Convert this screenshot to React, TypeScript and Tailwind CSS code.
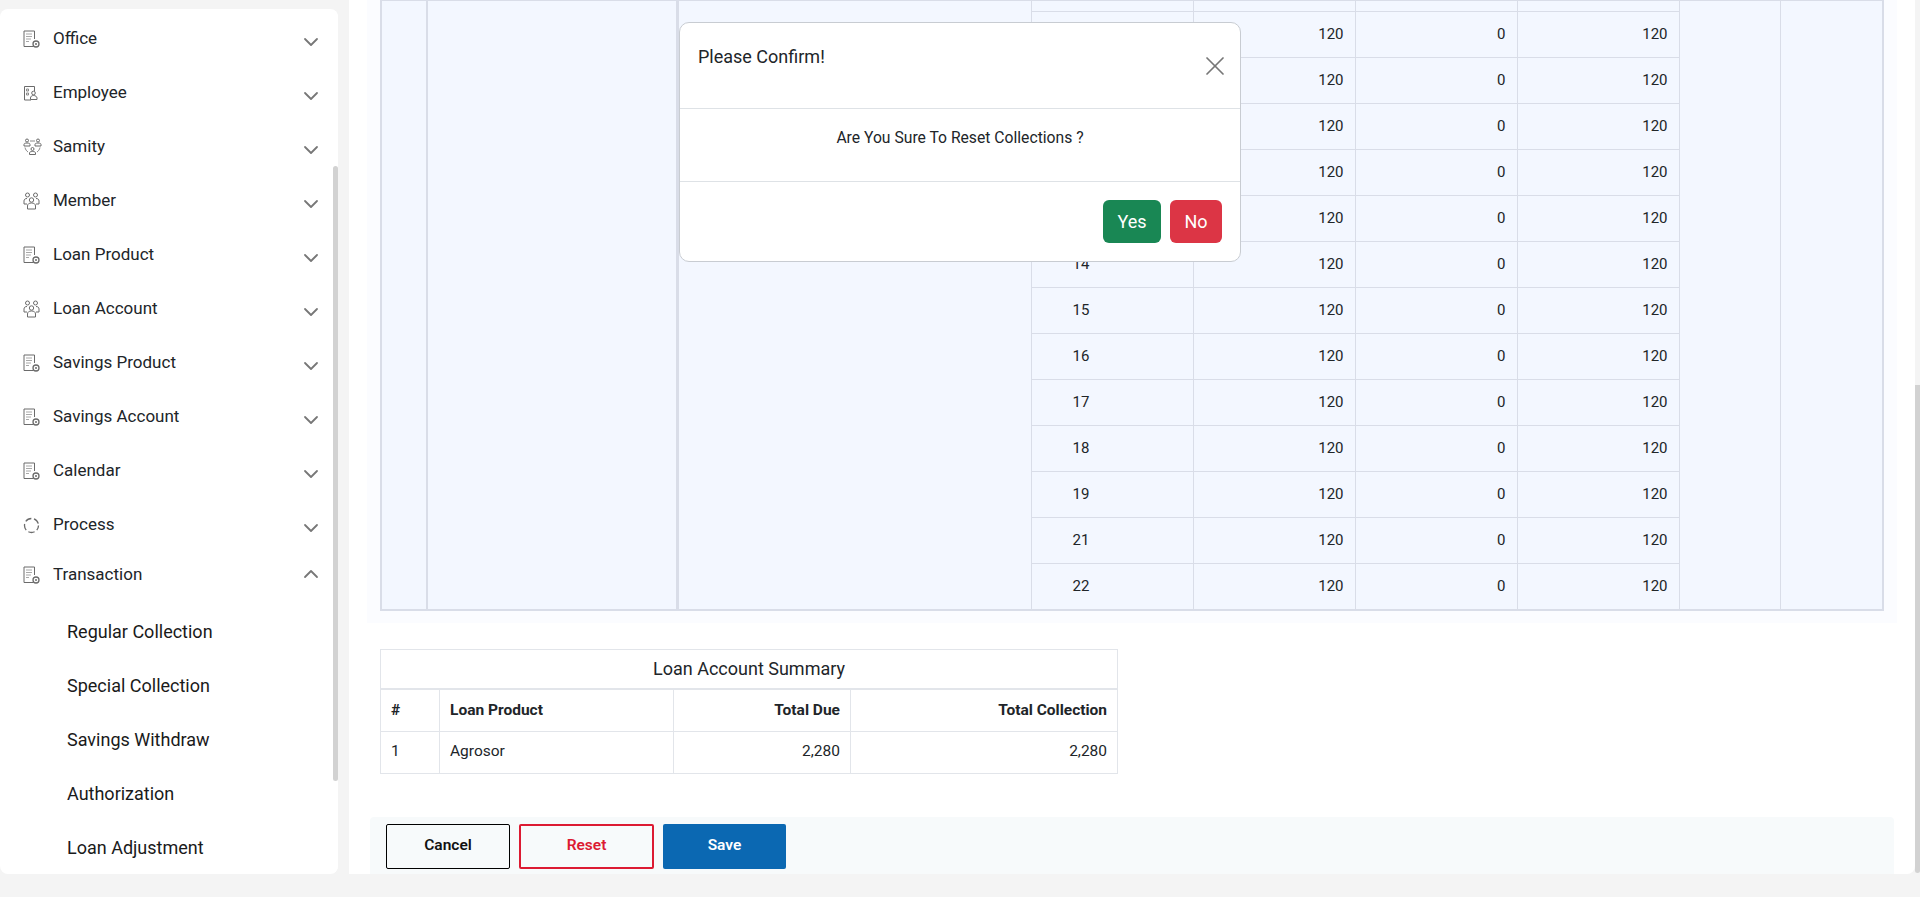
import React from 'react';
import { ChevronDown, ChevronUp, X } from 'lucide-react';

function DocIcon() {
  return (
    <svg width="17" height="18" viewBox="0 0 17 18" fill="none" stroke="#6b6b6b" strokeWidth="1">
      <path d="M10.500 16.500H1V1h10.500v8" />
      <path d="M3 4h6M3 6.500h6M3 9h5M3 11.500h3" stroke="#a8a8a8" />
      <circle cx="13" cy="14" r="3" strokeWidth="1.300" />
      <circle cx="13" cy="14" r="1" fill="#6b6b6b" stroke="none" />
    </svg>
  );
}

function EmployeeIcon() {
  return (
    <svg width="16" height="16" viewBox="0 0 16 16" fill="none" stroke="#6b6b6b" strokeWidth="1">
      <path d="M8 15H1.500V1.500h10V6" />
      <path d="M3.500 4h2v2h-2zM3.500 8h2v2h-2z" stroke="#8a8a8a" />
      <circle cx="10.500" cy="8" r="1.800" />
      <path d="M7.500 14.500v-1.500c0-1.500 1.200-2.500 3-2.500s3.500 1 3.500 2.500v1.500z" />
    </svg>
  );
}

function SamityIcon() {
  return (
    <svg width="19" height="18" viewBox="0 0 19 18" fill="none" stroke="#6b6b6b" strokeWidth="1">
      <circle cx="4" cy="2.500" r="1.500" />
      <circle cx="15" cy="2.500" r="1.500" />
      <circle cx="9.500" cy="11" r="1.500" />
      <path d="M1 8V6.500C1 5.500 2 5 4 5s3 .5 3 1.500V8zM12 8V6.500c0-1 1-1.500 3-1.500s3 .5 3 1.500V8zM6.500 16.500V15c0-1 1-1.500 3-1.500s3 .5 3 1.500v1.500z" />
      <path d="M7 3h5M2 9.500c.5 2 1.500 3.500 3 4.500M17 9.500c-.5 2-1.500 3.500-3 4.500" stroke="#8a8a8a" />
    </svg>
  );
}

function MemberIcon() {
  return (
    <svg width="17" height="18" viewBox="0 0 17 18" fill="none" stroke="#6b6b6b" strokeWidth="1">
      <circle cx="4.500" cy="3" r="2" />
      <circle cx="12.500" cy="3" r="2" />
      <circle cx="8.500" cy="8" r="2.200" />
      <path d="M1 12V9c0-1.500 1-2.500 3-2.500M16 12V9c0-1.500-1-2.500-3-2.500M1 12h3M16 12h-3" />
      <path d="M4.500 17v-3c0-2 1.500-3 4-3s4 1 4 3v3z" />
    </svg>
  );
}

function ProcessIcon() {
  return (
    <svg width="17" height="17" viewBox="0 0 17 17" fill="none" stroke="#6b6b6b" strokeWidth="1.300">
      <circle cx="8.500" cy="8.500" r="7" strokeDasharray="6.500 2.700" strokeDashoffset="1.500" />
    </svg>
  );
}

const menu = [
  { label: 'Office', icon: <DocIcon /> },
  { label: 'Employee', icon: <EmployeeIcon /> },
  { label: 'Samity', icon: <SamityIcon /> },
  { label: 'Member', icon: <MemberIcon /> },
  { label: 'Loan Product', icon: <DocIcon /> },
  { label: 'Loan Account', icon: <MemberIcon /> },
  { label: 'Savings Product', icon: <DocIcon /> },
  { label: 'Savings Account', icon: <DocIcon /> },
  { label: 'Calendar', icon: <DocIcon /> },
  { label: 'Process', icon: <ProcessIcon /> },
];

const subMenu = ['Regular Collection', 'Special Collection', 'Savings Withdraw', 'Authorization', 'Loan Adjustment'];

const rows = ['', '', '', '', '', '14', '15', '16', '17', '18', '19', '21', '22'];

const cell = 'border border-[#d9dde8]';
const sumCell = 'border border-[#e2e5ea] px-[10px]';

function Sidebar() {
  return (
    <aside className="flex w-[338px] h-[865px] mt-[9px] bg-white rounded-lg overflow-hidden shrink-0">
      <div className="flex-1 min-w-0 pt-[3px]">
        {menu.map((item) => (
          <div key={item.label} className="flex items-center h-[54px] pl-[23px] pr-[10px]">
            <span className="flex w-[30px] shrink-0 items-center">{item.icon}</span>
            <span className="flex-1 text-[17px] text-[#212529]">{item.label}</span>
            <ChevronDown size={24} strokeWidth={1.800} className="text-[#777777] mt-[6px]" />
          </div>
        ))}
        <div className="flex items-center h-[46px] pl-[23px] pr-[10px]">
          <span className="flex w-[30px] shrink-0 items-center"><DocIcon /></span>
          <span className="flex-1 text-[17px] text-[#212529]">Transaction</span>
          <ChevronUp size={24} strokeWidth={1.800} className="text-[#777777] -mt-[2px]" />
        </div>
        <div className="pt-[6px]">
          {subMenu.map((s) => (
            <div key={s} className="flex items-center h-[54px] pl-[67px] text-[18px] text-[#1a1a1a]">{s}</div>
          ))}
        </div>
      </div>
      <div className="w-[5px] shrink-0 bg-white pt-[157px]">
        <div className="h-[615px] bg-[#d2d2d2] rounded-full" />
      </div>
    </aside>
  );
}

function CollectionTable() {
  return (
    <div className="w-[1530px] bg-[#fbfcff] pl-[13px] pb-[12px]">
      <table className="table-fixed border-collapse w-[1502px] bg-[#f3f7ff] text-[15px] text-[#212529] border-2 border-t-0 border-[#d9dde8]">
        <colgroup>
          <col className="w-[46px]" />
          <col className="w-[250px]" />
          <col className="w-[354px]" />
          <col className="w-[162px]" />
          <col className="w-[162px]" />
          <col className="w-[162px]" />
          <col className="w-[162px]" />
          <col className="w-[101px]" />
          <col className="w-[103px]" />
        </colgroup>
        <tbody>
          <tr className="h-[11px]">
            <td rowSpan={14} className={`${cell} border-r-2`} />
            <td rowSpan={14} className={`${cell} border-r-3`} />
            <td rowSpan={14} className={cell} />
            <td className={cell} />
            <td className={cell} />
            <td className={cell} />
            <td className={cell} />
            <td rowSpan={14} className={cell} />
            <td rowSpan={14} className={cell} />
          </tr>
          {rows.map((n, i) => (
            <tr key={i} className="h-[46px]">
              <td className={`${cell} pl-[41px]`}>{n}</td>
              <td className={`${cell} text-right pr-[11px]`}>120</td>
              <td className={`${cell} text-right pr-[11px]`}>0</td>
              <td className={`${cell} text-right pr-[11px]`}>120</td>
            </tr>
          ))}
        </tbody>
      </table>
    </div>
  );
}

function SummaryTable() {
  return (
    <table className="table-fixed border-collapse w-[737px] ml-[13px] mt-[26px] text-[15.500px] text-[#212529]">
      <colgroup>
        <col className="w-[59px]" />
        <col className="w-[234px]" />
        <col className="w-[177px]" />
        <col className="w-[267px]" />
      </colgroup>
      <thead>
        <tr className="h-[40px]">
          <th colSpan={4} className="border border-[#e2e5ea] border-b-2 font-normal text-[18px]">Loan Account Summary</th>
        </tr>
        <tr className="h-[42px] font-bold">
          <th className={`${sumCell} text-left`}>#</th>
          <th className={`${sumCell} text-left`}>Loan Product</th>
          <th className={`${sumCell} text-right`}>Total Due</th>
          <th className={`${sumCell} text-right`}>Total Collection</th>
        </tr>
      </thead>
      <tbody>
        <tr className="h-[42px]">
          <td className={sumCell}>1</td>
          <td className={sumCell}>Agrosor</td>
          <td className={`${sumCell} text-right`}>2,280</td>
          <td className={`${sumCell} text-right`}>2,280</td>
        </tr>
      </tbody>
    </table>
  );
}

function ConfirmModal() {
  return (
    <div className="absolute left-[679px] top-[22px] w-[562px] h-[240px] bg-white border border-[#c8ccd2] rounded-[10px] flex flex-col text-[#212529]">
      <div className="flex h-[86px] shrink-0 border-b border-[#dee2e6] pl-[18px] pr-[9px]">
        <span className="flex-1 pt-[20px] text-[18px] leading-[27px]">Please Confirm!</span>
        <X size={32} strokeWidth={1.300} className="text-[#777777] mt-[27px]" />
      </div>
      <div className="flex h-[73px] shrink-0 items-start justify-center border-b border-[#dee2e6] pt-[18px] text-[15.700px] leading-[22px]">
        Are You Sure To Reset Collections ?
      </div>
      <div className="flex flex-1 items-start justify-end gap-[9px] pt-[18px] pr-[18px]">
        <button className="w-[58px] h-[43px] rounded-md bg-[#198754] text-white text-[18px]">Yes</button>
        <button className="w-[52px] h-[43px] rounded-md bg-[#dc3545] text-white text-[18px]">No</button>
      </div>
    </div>
  );
}

export default function App() {
  return (
    <div className="relative flex h-[897px] w-[1920px] overflow-hidden bg-[#f4f4f4] font-['Roboto',sans-serif]">
      <Sidebar />
      <main className="flex flex-1 min-w-0 ml-[11px] h-[874px]">
        <div className="flex-1 min-w-0 bg-white rounded-br-lg pl-[18px]">
          <CollectionTable />
          <SummaryTable />
          <div className="flex gap-[9px] w-[1524px] h-[57px] ml-[3px] mt-[43px] pt-[7px] pl-[16px] bg-[#f7fafb] rounded-t-sm">
            <button className="w-[124px] h-[45px] border border-black rounded-[2px] text-[15.500px] font-semibold text-[#111111]">Cancel</button>
            <button className="w-[135px] h-[45px] border-2 border-[#dc1a32] rounded-[2px] text-[15.500px] font-semibold text-[#dc1a32]">Reset</button>
            <button className="w-[123px] h-[45px] bg-[#0b68b2] rounded-[2px] text-[15.500px] font-semibold text-white">Save</button>
          </div>
        </div>
        <div className="w-[5px] shrink-0 pt-[385px]">
          <div className="h-[488px] bg-[#d2d2d2] rounded-b-sm" />
        </div>
      </main>
      <ConfirmModal />
    </div>
  );
}
